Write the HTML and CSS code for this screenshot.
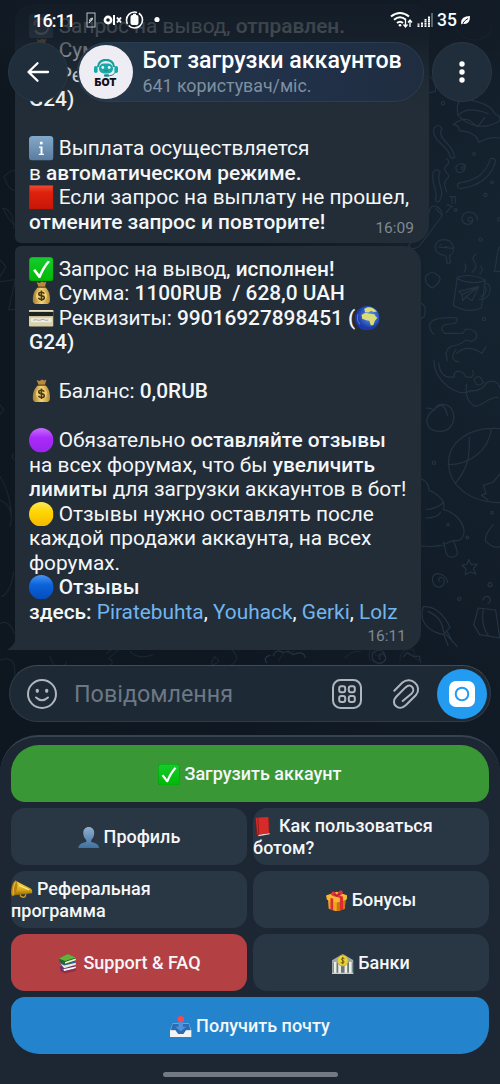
FILE: index.html
```html
<!DOCTYPE html>
<html lang="uk">
<head>
<meta charset="utf-8">
<title>Бот загрузки аккаунтов</title>
<link rel="stylesheet" href="styles.css">
</head>
<body>
<svg class="defs" width="0" height="0" aria-hidden="true">
  <defs>
    <linearGradient id="gInfo" x2="0" y2="1"><stop stop-color="#83a9ca"/><stop offset="1" stop-color="#587c9f"/></linearGradient>
    <linearGradient id="gRed" x2="0" y2="1"><stop stop-color="#ef4a31"/><stop offset=".3" stop-color="#df210e"/><stop offset="1" stop-color="#c91608"/></linearGradient>
    <linearGradient id="gGreen" x2="0" y2="1"><stop stop-color="#16cc2c"/><stop offset="1" stop-color="#00b807"/></linearGradient>
    <linearGradient id="gPurple" x2="0" y2="1"><stop stop-color="#c86cff"/><stop offset=".4" stop-color="#a92af8"/><stop offset="1" stop-color="#9b24ee"/></linearGradient>
    <linearGradient id="gYellow" x2="0" y2="1"><stop stop-color="#ffe85c"/><stop offset=".4" stop-color="#ffd600"/><stop offset="1" stop-color="#f3b900"/></linearGradient>
    <linearGradient id="gBlue" x2="0" y2="1"><stop stop-color="#4a94f2"/><stop offset=".4" stop-color="#0b63db"/><stop offset="1" stop-color="#044bb8"/></linearGradient>
    <linearGradient id="gGold" x2="1" y2="0"><stop stop-color="#a67c2c"/><stop offset=".5" stop-color="#f2d678"/><stop offset="1" stop-color="#b88a35"/></linearGradient>
    <radialGradient id="gSea" cx=".6" cy=".4"><stop stop-color="#5aa4f0"/><stop offset="1" stop-color="#1c39a8"/></radialGradient>
    <linearGradient id="gUser" x2="0" y2="1"><stop stop-color="#8fb0cd"/><stop offset="1" stop-color="#3d6f9f"/></linearGradient>
    <linearGradient id="gHorn" x2="0" y2="1"><stop stop-color="#f8dc4b"/><stop offset=".6" stop-color="#dba916"/><stop offset="1" stop-color="#8f6508"/></linearGradient>

    <symbol id="sync" viewBox="0 0 24 24"><rect width="24" height="24" rx="3.5" fill="#5b6a78"/><path d="M5 11a7 7 0 0 1 13-3M19 13a7 7 0 0 1-13 3" fill="none" stroke="#d5dbe0" stroke-width="2.200"/></symbol>
    <symbol id="info" viewBox="0 0 24 24"><rect width="24" height="24" rx="3.5" fill="url(#gInfo)"/><circle cx="12" cy="6.8" r="1.5" fill="#fff"/><path d="M9.800 10.200h3.400v7.200h1.400v1.300H9.600v-1.300h1.700v-5.900H9.800z" fill="#fff"/></symbol>
    <symbol id="square" viewBox="0 0 24 24"><rect width="24" height="24" fill="#b91708"/><rect x=".7" y=".7" width="22.6" height="22.3" fill="url(#gRed)"/></symbol>
    <symbol id="check" viewBox="0 0 24 24"><rect width="24" height="24" rx="3.5" fill="#009d0b"/><rect x=".6" y=".5" width="22.8" height="22.6" rx="3" fill="url(#gGreen)"/><path d="M4 13.2l2.1-1.4 4 5.1C12.300 11.500 15 7.500 18.500 3.600l2.100 1.100C16.600 9.200 13.700 14.500 11.200 20.500H9.500z" fill="#fff"/></symbol>
    <symbol id="bag" viewBox="0 0 24 24"><path d="M7.500 1l3 1 2-1.500 2.500 1L17 .5l-1.500 5.500h-6z" fill="#b98a3c"/><path d="M9 6h7c3.500 3 5 8 4.400 14-.3 2-2 2.600-3.400 2.600H7.700C5 22.600 4 21.500 3.800 19.500 3.400 14 5 9 9 6z" fill="url(#gGold)"/><path d="M8.600 6h7.600" stroke="#6b481b" stroke-width="1.400"/><circle cx="12.200" cy="14.500" r="5.400" fill="#efcf70"/><path d="M15 12.400c-.6-1-1.500-1.400-2.800-1.400-3.700 0-3.400 3.200 0 3.500 3.800.3 3.700 3.700.1 3.700-1.500 0-2.500-.5-3.100-1.600M12.200 9.400v10.300" fill="none" stroke="#4e3715" stroke-width="1.500"/></symbol>
    <symbol id="card" viewBox="0 0 24 24"><rect y="4" width="24" height="16" rx="1.200" fill="#d9d2a8"/><rect y="4.300" width="24" height="1.500" fill="#f2efd2"/><rect y="5.700" width="24" height="4.200" fill="#20241e"/><path d="M2 12h20v4H2z" fill="#f0eee2"/><path d="M4 14q2-1 4-.3t4-.2 3 0 4 .3" fill="none" stroke="#8f98ab" stroke-width=".8"/></symbol>
    <symbol id="globe" viewBox="0 0 24 24"><circle cx="12" cy="12" r="12" fill="url(#gSea)"/><path d="M9 3C12 .7 15 .8 18 2.500l3.500 3-3 .3-3-1-2.500 1.500-3-.3zM6.500 8.500l4-2 4 1 4.500.5 1.500 2.500 1.500 1-2.500 3-1.500 4-2.500.5-1.500-4.500-3-.5-4-1.500z" fill="#d9dc79"/><path d="M3 8c-1 3-1 7 2 10" fill="none" stroke="#5678c8" stroke-width="1"/></symbol>
    <symbol id="purple" viewBox="0 0 24 24"><circle cx="12" cy="12" r="12" fill="url(#gPurple)"/></symbol>
    <symbol id="yellow" viewBox="0 0 24 24"><circle cx="12" cy="12" r="12" fill="url(#gYellow)"/></symbol>
    <symbol id="blue" viewBox="0 0 24 24"><circle cx="12" cy="12" r="12" fill="url(#gBlue)"/></symbol>
    <symbol id="user" viewBox="0 0 24 24"><path d="M12 0c4 0 6.300 3 6.100 7-.1 3.500-1.600 6-3.300 7.600v2.100c5.300 1.200 8.500 2.600 9 7.300H.2c.5-4.700 3.700-6.100 9-7.300v-2.100C7.500 13 6 10.500 5.900 7 5.700 3 8 0 12 0z" fill="url(#gUser)"/></symbol>
    <symbol id="book" viewBox="0 0 24 24"><path d="M3 2.500L17 1l2 1.500v18L6 23l-2.500-2z" fill="#7a1c1e"/><path d="M6 21l12.500-2v1.500L6 22.500z" fill="#ddd"/><path d="M3 2l14-1 .8 18.300L5 21z" fill="#d72b2a"/><path d="M5.500 2l.9 18.700" stroke="#8e1b1d"/></symbol>
    <symbol id="horn" viewBox="0 0 24 24"><path d="M10 16l1 3.500q4 2 5-.5l.4-2" fill="none" stroke="#c49a25" stroke-width="1.500"/><path d="M5 2l17 8.500q2.500 2 1.500 5.500L2 18.500z" fill="url(#gHorn)"/><ellipse cx="3.500" cy="10.500" rx="3" ry="9" fill="#b98110" transform="rotate(12 4 11)"/><path d="M5 3.500C3 7.500 2 12.500 2.500 17.500" fill="none" stroke="#f0cd48" stroke-width="1"/><path d="M9 7l11 5" stroke="#fff28b" stroke-width="1.200"/></symbol>
    <symbol id="gift" viewBox="0 0 24 24"><path d="M2 8l10 3 10-3-1 13-9 3-9-3z" fill="#eda423"/><path d="M12 10l10-3-1 14-9 3z" fill="#ca770d"/><path d="M0 6L12 2l12 4-1 5-11 3L1 11z" fill="#f6b832"/><path d="M5 5l4-1.500 10 4V22l-3.500 1V9zM8 9.500V23l-3-1V9z" fill="#dc2d34"/><path d="M12 7C8 8 5 6 6.500 2.500 8 0 12 3 12 7 13 1 17-1 18.500 2 19.500 5 15 7 12 7z" fill="#e7343e"/><path d="M9 4.500l3 2.500 4-3.500" fill="none" stroke="#8b1420" stroke-width="1"/></symbol>
    <symbol id="books" viewBox="0 0 24 24"><path d="M3 15l11-3 7 3v5L9 23l-5-3z" fill="#6d356e"/><path d="M7 18l14-3v2L8 20z" fill="#fff"/><path d="M3 10l14-3 5 5-14 4z" fill="#2c61a4"/><path d="M4 12l4 2 13-3v2L8 17z" fill="#eee8db"/><path d="M2 6l10-5 9 4v4L9 13 3 10z" fill="#26662a"/><path d="M2 6l10-5 9 4-12 4z" fill="#61b33c"/><path d="M9 10l12-4v2L9 12z" fill="#f5efd9"/><path d="M4 19l4 2 13-4v2L9 23l-6-3z" fill="#a62b34"/></symbol>
    <symbol id="bank" viewBox="0 0 24 24"><path d="M0 8L12 1l12 7v16H0z" fill="#9eabac"/><path d="M1 11h22v12H1z" fill="#68777f"/><path d="M2 10h3v13H2zM7 12h3v11H7zM14 12h3v11h-3zM19 10h3v13h-3z" fill="#eceee0"/><path d="M0 22h24v2H0z" fill="#cad0c6"/><circle cx="12" cy="8.500" r="6" fill="#ecd33a" stroke="#c3a928"/><path d="M14 6.500c-2-2-5.500.5-2 2 3.800 1.500 0 4-2.300 2M12 4.500v8" fill="none" stroke="#5f5310" stroke-width="1.100"/></symbol>
    <symbol id="inbox" viewBox="0 0 24 24"><path d="M3 8h18l3 8v8H0v-8z" fill="#7fb2df"/><path d="M3 9h18l2 7h-5l-3 4H9l-3-4H1z" fill="#2d6cb2"/><path d="M0 16h6l3 4h6l3-4h6v8H0z" fill="#f1f3f4"/><circle cx="12" cy="3.700" r="3.700" fill="#f24a55"/><path d="M9.500 7h5v5H18l-6 5-6-5h3.500z" fill="#4d93df"/></symbol>
  </defs>
</svg>

<main class="screen">
  <svg class="wallpaper" viewBox="0 0 500 1084" aria-hidden="true">
    <g class="doodle" transform="translate(250 120) scale(.33333)">
      <path d="M552 24q16-16 24 2c-20 28 38 50 38 86q-10 8-14-4c-4-30-58-45-48-84zM590 116q12 10 0 20t0 22 0 20 0 38M550 156q10-14 20 0c-16 30 20 55-2 88q-10 5-12-6c12-20-16-48-6-82zM722 116q16-4 14 12c-16 46-48 68-104 78-12-3-14-14-2-18 52-8 76-28 92-72zM640 148c-8 2-6-10 2-8 12 12-18 28-24 8-4-18 24-22 30-8M664 304c-18 2-10-20 2-10 12 24-34 28-30-2 6-24 46-20 46 8M600 230h16v20m-10-20v20M588 278l14-16m-10-8l16 6"/>
      <circle cx="672" cy="102" r="4"/><circle cx="726" cy="187" r="4"/><circle cx="706" cy="225" r="5"/><circle cx="692" cy="359" r="5"/><circle cx="702" cy="597" r="5"/><circle cx="617" cy="270" r="4"/><circle cx="748" cy="298" r="5"/>
      <path d="M610 14q24-22 46-14l28 20 20-28M610 14q18 2 18 18 52 4 58 36 30-20 64-14M538 276c6-35 42-12 38 12l-66 88q-22 20-34 2zM558 266l18 20M580 405c-34-4-32-46 2-46 30 0 38 38 16 48l4 20-10 4-4-22zM566 381l42 4M570 374h2m15 6h2M528 468q18-20 35-2 20 10-15 38-28-12-20-36zM622 472l-12 84q42 26 84 8l12-84q-44-22-84-8zm84 18c24-2 18 52-18 48m2-10c18 4 22-24 14-28M622 476q42 20 84 6M626 514l60-14-20 42-18-12-10 12-2-18zm10 10l50-24-38 30M642 456q10-14 2-24m22 26q20-20 6-34-8-14 6-22m12 60q12-10 2-24M750 380c-14 20-8 54-18 74h20M514 550q18 10 8 40l-8 6M552 644c-32-36-6-56 70-50 0 16-8 18-24 18-28 0-26 18-14 28h54l8-12c28-6 50 24 20 36l-20-4c-22 28-50 4-58 40l4 22M620 700q32-30 76 0l12-20m-90 10q-24 30 10 36"/>
    </g>
    <g class="doodle" transform="translate(250 360) scale(.33333)">
      <path d="M552 0c-4 58 72 118 108 92q34 4 50-24 30-14 40 16M566 10q6 50 48 40c-8-22 30-20 32 0q30 8 22-18M650 72q-8 46 22 66c28 4 38-28 72-26M672 58q18-20 28 10-20 18-28-10M554 148c-40 28-24 66 14 66 54 2 56-74 16-80q-22-4-30 14zm-26-4q14 0 26 6M554 148q28-30 38 18M750 206c-210-14-202 220 0 222M594 314c64 0 120-40 130-106M658 232c0 50 2 84-42 138M750 342l-20 24-30 10 8 24-14 6 20 14M514 356q24 12 22 34 56 26 44 58c70 20 78 94 38 94-30-4-18 24-104 16M530 448q26 0 50-20m0 118c8 22 6 46 24 46 30-4 16-20 6-52M526 474q38 0 46-18M656 598l8 16 18-2-12 14 8 16-18-6-14 8 2-18-12-10 16-4zM570 664c-12-4 2-20 12-6 8 30-40 34-34-6 12-24 46-2 44 16M520 740c-18 54 30 78 60 84l20-22q-30-64-80-62zm14 14q44 20 46 60l42 46m-30-44l16 30m-26-22l12 32M685 744l-14 50 18 30 60 10-12-84zM700 748q-8 50 16 80M730 494q-26 28-24 48 24 26 44 18M698 720q8-16 20-8 8 14-4 18M60 886q-22 6-10 22m20-22q10-22 30-8 20-10 28 6 34-14 38 10M390 898q-8-20 10-16 18 16-8 28-32-2-24-32 24-18 36 4M460 890l12-12 20 12 16-2 4 20"/>
      <circle cx="552" cy="308" r="5"/><circle cx="652" cy="532" r="4"/><circle cx="628" cy="716" r="5"/><circle cx="726" cy="458" r="4"/><circle cx="594" cy="494" r="3"/><circle cx="720" cy="674" r="6"/>
    </g>
    <g class="doodle left" transform="scale(.33333)">
      <path d="M0 480l-8 20M12 530q30-28 34-15M12 530q15 45 34 40M8 625q30 0 34 60M10 625q15 38 34 48M0 780l18 20-18 30M0 845l46-6-20 90h20M0 1215l12 14-12 14M40 1360q-8 10 2 20M0 1430q28 42 34 110M0 1500q46 22 30 80M0 1980q60-20 40 80M5 1790q26-12 36-72M0 1870q28-12 42 30M36 2090q12 14 0 40M150 1970q20 60 50 16M320 1960q22-20 32-8l-26 24q20 10 4 20M390 1955q24 26 70 8M646 1970q-20 24-5 24 30-14 0-22M695 1950q30 24 0 44M835 1982l20-28 20 8 10-18 24 4M1035 1974q24-26 48-18M1110 1982q-10-34 16-42 34 8 14 30-22-4-12-18M1200 1980q0-36 40-32l5 25 18 15"/>
    </g>
    <g class="doodle" transform="translate(250 0) scale(.33333)">
      <path d="M540 230q20 20 16 44l-18 4M624 346q-12-62 40-45 60 12 70 40 40 20-18 36-52 10-92-31zM624 346q30-30 90-5M610 60q10 60 70 60 48-10 45-50"/><circle cx="579" cy="310" r="5"/>
    </g>
  </svg>

  <section class="chat">
    <article class="bubble first">
      <p><svg class="e"><use href="#sync"/></svg> Запрос на вывод, <b>отправлен.</b></p>
      <p><svg class="e"><use href="#bag"/></svg> Сумма:</p>
      <p><svg class="e"><use href="#card"/></svg> Реквизиты:</p>
      <p><b>G24)</b></p>
      <p class="blank"></p>
      <p><svg class="e"><use href="#info"/></svg> Выплата осуществляется</p>
      <p>в <b>автоматическом режиме.</b></p>
      <p><svg class="e"><use href="#square"/></svg> Если запрос на выплату не прошел,</p>
      <p><b>отмените запрос и повторите!</b></p>
      <time>16:09</time>
    </article>
    <article class="bubble second">
      <p><svg class="e"><use href="#check"/></svg> Запрос на вывод, <b>исполнен!</b></p>
      <p><svg class="e"><use href="#bag"/></svg> Сумма: <b>1100RUB&nbsp; / 628,0 UAH</b></p>
      <p><svg class="e"><use href="#card"/></svg> Реквизиты: <b>99016927898451 (</b><svg class="e"><use href="#globe"/></svg></p>
      <p><b>G24)</b></p>
      <p class="blank"></p>
      <p><svg class="e"><use href="#bag"/></svg> Баланс: <b>0,0RUB</b></p>
      <p class="blank"></p>
      <p><svg class="e"><use href="#purple"/></svg> Обязательно <b>оставляйте отзывы</b></p>
      <p>на всех форумах, что бы <b>увеличить</b></p>
      <p><b>лимиты</b> для загрузки аккаунтов в бот!</p>
      <p><svg class="e"><use href="#yellow"/></svg> Отзывы нужно оставлять после</p>
      <p>каждой продажи аккаунта, на всех</p>
      <p>форумах.</p>
      <p><svg class="e"><use href="#blue"/></svg> <b>Отзывы</b></p>
      <p><b>здесь:</b> <a>Piratebuhta</a>, <a>Youhack</a>, <a>Gerki</a>, <a>Lolz</a></p>
      <time>16:11</time>
      <svg class="tail" viewBox="0 0 9 12"><path d="M9 0C8 5 5 9 0 12h9z"/></svg>
    </article>
  </section>

  <div class="composer">
    <svg class="smile" viewBox="0 0 32 32"><circle cx="16" cy="16" r="14"/><path d="M10 19.500q6 5.500 12 0"/><ellipse class="solid" cx="11.300" cy="12.800" rx="1.700" ry="2.100"/><ellipse class="solid" cx="20.700" cy="12.800" rx="1.700" ry="2.100"/></svg>
    <span class="placeholder">Повідомлення</span>
    <svg class="apps" viewBox="0 0 32 32"><rect x="2" y="2" width="28" height="28" rx="7.500"/><rect x="8.200" y="8.300" width="6" height="6" rx="2"/><rect x="17.800" y="8.300" width="6" height="6" rx="2"/><rect x="8.200" y="17.900" width="6" height="6" rx="2"/><rect x="17.800" y="17.900" width="6" height="6" rx="2"/></svg>
    <svg class="clip" viewBox="0 0 32 32"><path d="M4.300 12.700l7.900-7.900C20.700-2.500 33 8 26 17L16 27C8.400 34.200-.2 25.500 6.200 18.700L15.500 9.400C20.700 4.600 26 11 21.700 15.400L12.700 23"/></svg>
    <span class="camera"><svg viewBox="0 0 26 26"><rect width="26" height="26" rx="7" fill="#fff"/><circle cx="13" cy="13" r="6.300" fill="none" stroke="#229bf0" stroke-width="2"/></svg></span>
  </div>

  <div class="keyboard">
    <div class="key green wide"><span><svg class="e"><use href="#check"/></svg> Загрузить аккаунт</span></div>
    <div class="key"><span><svg class="e"><use href="#user"/></svg> Профиль</span></div>
    <div class="key lines"><span><svg class="e"><use href="#book"/></svg> Как пользоваться<br>ботом?</span></div>
    <div class="key lines"><span><svg class="e"><use href="#horn"/></svg> Реферальная<br>программа</span></div>
    <div class="key"><span><svg class="e"><use href="#gift"/></svg> Бонусы</span></div>
    <div class="key red"><span><svg class="e"><use href="#books"/></svg> Support &amp; FAQ</span></div>
    <div class="key"><span><svg class="e"><use href="#bank"/></svg> Банки</span></div>
    <div class="key azure wide"><span><svg class="e"><use href="#inbox"/></svg> Получить почту</span></div>
    <div class="home"></div>
  </div>

  <header class="top">
    <div class="status">
      <span class="clock">16:11</span>
      <svg class="notices" width="78" height="20" viewBox="0 0 78 20" fill="none" stroke="#fff">
        <rect x="1" y="3" width="8" height="14" stroke="#b9c0c5"/><path d="M3.500 11q0-3 3-3-.3 4-3 3zM3 13l3-4" stroke="#dce0e3"/>
        <circle cx="22" cy="10" r="3.100" stroke-width="2.600"/><path d="M28 5v10" stroke-width="2"/><path d="M31 7.500l4 5m0-5l-4 5" stroke-width="2"/>
        <circle cx="48.500" cy="10" r="8" stroke-width="1.600" stroke-dasharray="19 2"/><rect x="44.500" y="5" width="8" height="10" rx="2" fill="#fff" stroke="none"/><path d="M47 4.500h3" stroke-width="1.500"/>
        <circle cx="71" cy="9.500" r="2.600" fill="#fff" stroke="none"/>
      </svg>
      <svg class="signals" width="44" height="20" viewBox="0 0 44 20" fill="none" stroke="#fff">
        <path d="M1 6.500q9-7 18 0M4 9.800q6-5 12 0M7 13q3-2.500 6 0" stroke-width="2"/><circle cx="10" cy="15.300" r="1.300" fill="#fff" stroke="none"/><path d="M15.500 10v7m-2-2.500l2 2.500 2-2.500M20 17v-7m-2 2.500l2-2.500 2 2.500" stroke-width="1.300"/>
        <path d="M28.500 17v-3.500M32 17v-5M35.500 17V9M39 17V6" stroke-width="2" stroke-dasharray="1.800 .4"/><path d="M42 17V3" stroke="#747d85" stroke-width="1.500"/>
      </svg>
      <span class="battery">35</span>
      <svg width="10" height="10" viewBox="0 0 10 10"><path d="M0 8Q0 1 9 1q0 8-5.500 8L2 8.200.5 9.500z" fill="#fff"/><path d="M2 8q2-3 5-4.500" fill="none" stroke="#16212c"/></svg>
    </div>
    <nav class="bar">
      <span class="round"><svg width="24" height="22" viewBox="0 0 24 22"><path d="M22 11H3M11.500 2.200L2.500 11l9 8.800" fill="none" stroke="#fff" stroke-width="2.300" stroke-linecap="round" stroke-linejoin="round"/></svg></span>
      <div class="title">
        <span class="avatar">
          <svg width="24" height="19" viewBox="0 0 24 19"><path d="M4 8C4-1.500 20-1.500 20 8" fill="none" stroke="#159f9e" stroke-width="2.200"/><rect y="7" width="3.600" height="7" rx="1.800" fill="#19a8a6"/><rect x="20.400" y="7" width="3.600" height="7" rx="1.800" fill="#19a8a6"/><rect x="5" y="4.500" width="14" height="10" rx="4.800" fill="#1aa9a7"/><circle cx="8.800" cy="8.500" r="1.400" fill="#e8f5f8"/><circle cx="15.200" cy="8.500" r="1.400" fill="#e8f5f8"/><path d="M10 11.500q2 1.200 4 0M21.500 13q-2 4-7 4" fill="none" stroke="#168b8c"/><rect x="10" y="15.300" width="5" height="2.400" rx="1" fill="#168b8c"/></svg>
          <em>БОТ</em>
        </span>
        <div class="names"><h1>Бот загрузки аккаунтов</h1><small>641 користувач/міс.</small></div>
      </div>
      <span class="round"><svg width="8" height="24" viewBox="0 0 8 24" fill="#fff"><circle cx="4" cy="4" r="2.700"/><circle cx="4" cy="12" r="2.700"/><circle cx="4" cy="20" r="2.700"/></svg></span>
    </nav>
  </header>
</main>
</body>
</html>
```
FILE: styles.css
```css
* { box-sizing: border-box; }
body { margin: 0; background: #101923; font-family: Roboto, "Noto Sans", sans-serif; color: #f4f6f8; }
p, h1 { margin: 0; }
b { font-weight: 500; }
.defs { position: absolute; }
.screen {
  position: relative; isolation: isolate; display: flex; flex-direction: column;
  width: 500px; height: 1084px; overflow: hidden;
  background: radial-gradient(ellipse 250px 420px at 100% 270px, #152431, transparent), linear-gradient(90deg, #0e161f, #111b26);
}
.wallpaper { position: absolute; inset: 0; z-index: -1; }
.doodle { fill: none; stroke: #243341; stroke-width: 3.6; stroke-linecap: round; stroke-linejoin: round; }
.doodle.left { stroke: #1a2530; }

.chat { display: flex; flex-direction: column; align-items: flex-start; gap: 3px; height: 665px; padding: 4px 0 0 15px; }
.bubble { position: relative; background: #222d38; padding: 9.500px 14px 0; font-size: 20.850px; line-height: 24.500px; }
.bubble p { height: 24.500px; white-space: nowrap; }
.first { width: 414px; height: 239px; border-radius: 18px 18px 18px 6px; }
.second { width: 406px; height: 404px; border-radius: 6px 18px 18px 0; padding-top: 10.800px; }
.bubble .e { width: 24.500px; height: 24.500px; vertical-align: -5.500px; }
.bubble a { color: #72b5ee; }
.bubble time { position: absolute; right: 15px; bottom: 5px; font-size: 15.500px; line-height: 19px; color: #7e8993; }
.second time { bottom: 4px; }
.tail { position: absolute; left: -8px; bottom: 0; width: 9px; height: 12px; fill: #222d38; }

.composer {
  display: flex; align-items: center; height: 57px; margin: 0 9px; padding: 0 3px 0 16px;
  border: 1px solid #303b47; border-top-color: #414b56; border-radius: 29px; background: #1e2936;
}
.composer > svg { width: 32px; height: 32px; fill: none; stroke: #b0b6bd; stroke-width: 2; stroke-linecap: round; }
.composer .solid { fill: #b0b6bd; stroke: none; }
.placeholder { flex: 1; padding-left: 16px; font-size: 23.300px; line-height: 30px; color: #6c7885; }
.apps { margin-right: 27px; }
.clip { margin-right: 15px; }
.camera { display: grid; place-items: center; width: 50px; height: 50px; border-radius: 50%; background: #229bf0; }
.camera svg { width: 26px; height: 26px; }

.keyboard {
  display: grid; grid-template-columns: 236px 236px; grid-auto-rows: 57px; gap: 6px;
  height: 349px; margin-top: 13px; padding: 8px 11px 0;
  border-top: 2px solid #36424e; border-radius: 38px 38px 0 0; background: #1c2733;
}
.key { display: flex; align-items: center; justify-content: center; padding-top: 1.500px; border-radius: 14px; background: #293644; font-size: 18px; font-weight: 500; line-height: 22px; white-space: nowrap; }
.key .e { width: 21.500px; height: 21.500px; vertical-align: -5px; }
.key.lines { justify-content: flex-start; }
.wide { grid-column: span 2; }
.green { background: #399735; border-radius: 28px 28px 14px 14px; }
.red { background: #b34144; }
.azure { background: #2384cd; border-radius: 14px 14px 28px 28px; }
.home { grid-column: span 2; justify-self: center; width: 175px; height: 5px; margin-top: 12px; border-radius: 3px; background: #747a84; }

.top { position: absolute; inset: 0 0 auto; height: 110px; background: linear-gradient(rgba(18,27,37,.9), rgba(18,27,37,.78) 36px, rgba(18,27,37,.1) 85px, rgba(18,27,37,0)); }
.status { display: flex; align-items: center; height: 40px; padding-left: 33px; color: #fff; }
.clock { width: 53px; font-size: 18px; font-weight: 500; letter-spacing: -.8px; }
.signals { margin-left: 226px; }
.battery { margin: 0 4px 0 3px; font-size: 17.500px; font-weight: 500; }
.bar { display: flex; justify-content: space-between; padding: 2px 8px 0; }
.round { display: grid; place-items: center; width: 60px; height: 60px; border: 1px solid #2b3844; border-radius: 50%; background: #202d3a; }
.title { display: flex; align-items: center; width: 347px; height: 60px; padding-left: 1px; border: 1px solid #293e50; border-radius: 30px; background: linear-gradient(90deg, #263748, #203149 60%, #202d40); }
.avatar { display: flex; flex-direction: column; align-items: center; width: 54px; height: 54px; padding-top: 14px; border-radius: 50%; background: #eeedf4; }
.avatar em { font: 900 10.500px/10px Inter, sans-serif; color: #121318; }
.names { padding-left: 10px; }
.names h1 { font-size: 23.200px; line-height: 27px; font-weight: 500; white-space: nowrap; color: #fff; }
.names small { display: block; font-size: 17.800px; line-height: 23px; color: #7f90a1; }
```
